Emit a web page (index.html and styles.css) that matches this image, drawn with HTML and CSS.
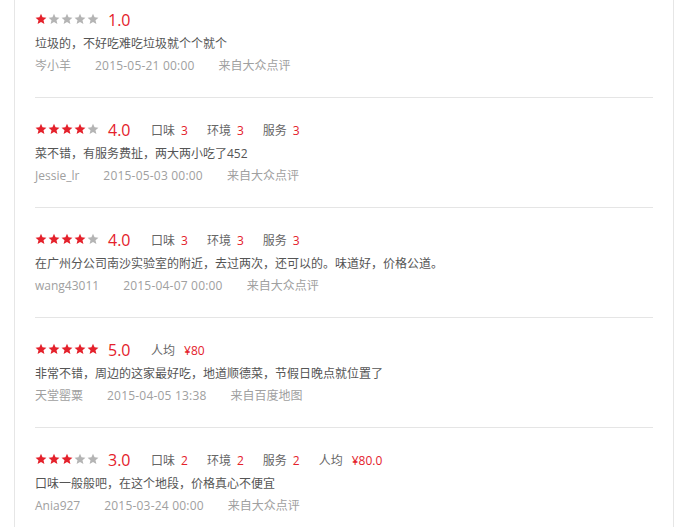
FILE: index.html
```html
<!doctype html>
<html lang="zh-CN">
  <head>
    <title>评论</title>
    <meta charset="UTF-8" />
    <meta name="viewport" content="width=device-width, initial-scale=1" />
    <link rel="stylesheet" href="styles.css">
  </head>

  <body>
    <div class="panel">
      <ul class="comment-list">
        <li class="comment">
          <div class="comment-head">
            <span class="stars">
              <svg class="star on" viewBox="0 0 24 24"><path d="M12 1.5l3.1 7.2 7.8.7-5.9 5.1 1.8 7.6L12 18.1l-6.8 4 1.8-7.6-5.9-5.1 7.8-.7z"/></svg>
              <svg class="star" viewBox="0 0 24 24"><path d="M12 1.5l3.1 7.2 7.8.7-5.9 5.1 1.8 7.6L12 18.1l-6.8 4 1.8-7.6-5.9-5.1 7.8-.7z"/></svg>
              <svg class="star" viewBox="0 0 24 24"><path d="M12 1.5l3.1 7.2 7.8.7-5.9 5.1 1.8 7.6L12 18.1l-6.8 4 1.8-7.6-5.9-5.1 7.8-.7z"/></svg>
              <svg class="star" viewBox="0 0 24 24"><path d="M12 1.5l3.1 7.2 7.8.7-5.9 5.1 1.8 7.6L12 18.1l-6.8 4 1.8-7.6-5.9-5.1 7.8-.7z"/></svg>
              <svg class="star" viewBox="0 0 24 24"><path d="M12 1.5l3.1 7.2 7.8.7-5.9 5.1 1.8 7.6L12 18.1l-6.8 4 1.8-7.6-5.9-5.1 7.8-.7z"/></svg>
            </span>
            <span class="score">1.0</span>
          </div>
          <p class="comment-text">垃圾的，不好吃难吃垃圾就个个就个</p>
          <div class="comment-meta">
            <span>岑小羊</span>
            <span class="time">2015-05-21 00:00</span>
            <span>来自大众点评</span>
          </div>
        </li>

        <li class="comment">
          <div class="comment-head">
            <span class="stars">
              <svg class="star on" viewBox="0 0 24 24"><path d="M12 1.5l3.1 7.2 7.8.7-5.9 5.1 1.8 7.6L12 18.1l-6.8 4 1.8-7.6-5.9-5.1 7.8-.7z"/></svg>
              <svg class="star on" viewBox="0 0 24 24"><path d="M12 1.5l3.1 7.2 7.8.7-5.9 5.1 1.8 7.6L12 18.1l-6.8 4 1.8-7.6-5.9-5.1 7.8-.7z"/></svg>
              <svg class="star on" viewBox="0 0 24 24"><path d="M12 1.5l3.1 7.2 7.8.7-5.9 5.1 1.8 7.6L12 18.1l-6.8 4 1.8-7.6-5.9-5.1 7.8-.7z"/></svg>
              <svg class="star on" viewBox="0 0 24 24"><path d="M12 1.5l3.1 7.2 7.8.7-5.9 5.1 1.8 7.6L12 18.1l-6.8 4 1.8-7.6-5.9-5.1 7.8-.7z"/></svg>
              <svg class="star" viewBox="0 0 24 24"><path d="M12 1.5l3.1 7.2 7.8.7-5.9 5.1 1.8 7.6L12 18.1l-6.8 4 1.8-7.6-5.9-5.1 7.8-.7z"/></svg>
            </span>
            <span class="score">4.0</span>
            <span class="sub">口味<em>3</em></span>
            <span class="sub">环境<em>3</em></span>
            <span class="sub">服务<em>3</em></span>
          </div>
          <p class="comment-text">菜不错，有服务费扯，两大两小吃了452</p>
          <div class="comment-meta">
            <span>Jessie_lr</span>
            <span class="time">2015-05-03 00:00</span>
            <span>来自大众点评</span>
          </div>
        </li>

        <li class="comment">
          <div class="comment-head">
            <span class="stars">
              <svg class="star on" viewBox="0 0 24 24"><path d="M12 1.5l3.1 7.2 7.8.7-5.9 5.1 1.8 7.6L12 18.1l-6.8 4 1.8-7.6-5.9-5.1 7.8-.7z"/></svg>
              <svg class="star on" viewBox="0 0 24 24"><path d="M12 1.5l3.1 7.2 7.8.7-5.9 5.1 1.8 7.6L12 18.1l-6.8 4 1.8-7.6-5.9-5.1 7.8-.7z"/></svg>
              <svg class="star on" viewBox="0 0 24 24"><path d="M12 1.5l3.1 7.2 7.8.7-5.9 5.1 1.8 7.6L12 18.1l-6.8 4 1.8-7.6-5.9-5.1 7.8-.7z"/></svg>
              <svg class="star on" viewBox="0 0 24 24"><path d="M12 1.5l3.1 7.2 7.8.7-5.9 5.1 1.8 7.6L12 18.1l-6.8 4 1.8-7.6-5.9-5.1 7.8-.7z"/></svg>
              <svg class="star" viewBox="0 0 24 24"><path d="M12 1.5l3.1 7.2 7.8.7-5.9 5.1 1.8 7.6L12 18.1l-6.8 4 1.8-7.6-5.9-5.1 7.8-.7z"/></svg>
            </span>
            <span class="score">4.0</span>
            <span class="sub">口味<em>3</em></span>
            <span class="sub">环境<em>3</em></span>
            <span class="sub">服务<em>3</em></span>
          </div>
          <p class="comment-text">在广州分公司南沙实验室的附近，去过两次，还可以的。味道好，价格公道。</p>
          <div class="comment-meta">
            <span>wang43011</span>
            <span class="time">2015-04-07 00:00</span>
            <span>来自大众点评</span>
          </div>
        </li>

        <li class="comment">
          <div class="comment-head">
            <span class="stars">
              <svg class="star on" viewBox="0 0 24 24"><path d="M12 1.5l3.1 7.2 7.8.7-5.9 5.1 1.8 7.6L12 18.1l-6.8 4 1.8-7.6-5.9-5.1 7.8-.7z"/></svg>
              <svg class="star on" viewBox="0 0 24 24"><path d="M12 1.5l3.1 7.2 7.8.7-5.9 5.1 1.8 7.6L12 18.1l-6.8 4 1.8-7.6-5.9-5.1 7.8-.7z"/></svg>
              <svg class="star on" viewBox="0 0 24 24"><path d="M12 1.5l3.1 7.2 7.8.7-5.9 5.1 1.8 7.6L12 18.1l-6.8 4 1.8-7.6-5.9-5.1 7.8-.7z"/></svg>
              <svg class="star on" viewBox="0 0 24 24"><path d="M12 1.5l3.1 7.2 7.8.7-5.9 5.1 1.8 7.6L12 18.1l-6.8 4 1.8-7.6-5.9-5.1 7.8-.7z"/></svg>
              <svg class="star on" viewBox="0 0 24 24"><path d="M12 1.5l3.1 7.2 7.8.7-5.9 5.1 1.8 7.6L12 18.1l-6.8 4 1.8-7.6-5.9-5.1 7.8-.7z"/></svg>
            </span>
            <span class="score">5.0</span>
            <span class="sub price">人均<em>¥80</em></span>
          </div>
          <p class="comment-text">非常不错，周边的这家最好吃，地道顺德菜，节假日晚点就位置了</p>
          <div class="comment-meta">
            <span>天堂罂粟</span>
            <span class="time">2015-04-05 13:38</span>
            <span>来自百度地图</span>
          </div>
        </li>

        <li class="comment">
          <div class="comment-head">
            <span class="stars">
              <svg class="star on" viewBox="0 0 24 24"><path d="M12 1.5l3.1 7.2 7.8.7-5.9 5.1 1.8 7.6L12 18.1l-6.8 4 1.8-7.6-5.9-5.1 7.8-.7z"/></svg>
              <svg class="star on" viewBox="0 0 24 24"><path d="M12 1.5l3.1 7.2 7.8.7-5.9 5.1 1.8 7.6L12 18.1l-6.8 4 1.8-7.6-5.9-5.1 7.8-.7z"/></svg>
              <svg class="star on" viewBox="0 0 24 24"><path d="M12 1.5l3.1 7.2 7.8.7-5.9 5.1 1.8 7.6L12 18.1l-6.8 4 1.8-7.6-5.9-5.1 7.8-.7z"/></svg>
              <svg class="star" viewBox="0 0 24 24"><path d="M12 1.5l3.1 7.2 7.8.7-5.9 5.1 1.8 7.6L12 18.1l-6.8 4 1.8-7.6-5.9-5.1 7.8-.7z"/></svg>
              <svg class="star" viewBox="0 0 24 24"><path d="M12 1.5l3.1 7.2 7.8.7-5.9 5.1 1.8 7.6L12 18.1l-6.8 4 1.8-7.6-5.9-5.1 7.8-.7z"/></svg>
            </span>
            <span class="score">3.0</span>
            <span class="sub">口味<em>2</em></span>
            <span class="sub">环境<em>2</em></span>
            <span class="sub">服务<em>2</em></span>
            <span class="sub price">人均<em>¥80.0</em></span>
          </div>
          <p class="comment-text">口味一般般吧，在这个地段，价格真心不便宜</p>
          <div class="comment-meta">
            <span>Ania927</span>
            <span class="time">2015-03-24 00:00</span>
            <span>来自大众点评</span>
          </div>
        </li>
      </ul>
    </div>
  </body>
</html>
```

FILE: styles.css
```css
body {
  margin: 0;
  padding: 0;
  background-color: #ffffff;
  font-family: 'Open Sans', 'Noto Sans CJK SC', sans-serif;
  font-size: 12px;
}

.panel {
  margin: 0 14px;
  padding: 0 20px;
  min-height: 527px;
  border-left: 1px solid #e6e6e6;
  border-right: 1px solid #e6e6e6;
}

.comment-list {
  margin: 0;
  padding: 0;
  list-style: none;
}

.comment {
  padding: 19px 0 21px;
  border-bottom: 1px solid #e5e5e5;
}

.comment:first-child {
  padding-top: 7px;
}

.comment-head {
  display: flex;
  align-items: center;
  height: 24px;
  color: #666666;
}

.stars {
  display: flex;
  align-items: center;
  gap: 1px;
}

.star {
  width: 12px;
  height: 12px;
  fill: #b4b4b4;
}

.star.on {
  fill: #e4212b;
}

.score {
  margin-left: 9px;
  margin-top: 2px;
  width: 43px;
  font-size: 16px;
  color: #e4212b;
}

.sub {
  margin-top: 2px;
  margin-right: 19px;
}

.sub em {
  margin-left: 6px;
  font-style: normal;
  color: #e4212b;
}

.sub.price em {
  margin-left: 9px;
}

.comment-text {
  margin: 0;
  padding-top: 1px;
  line-height: 24px;
  color: #555555;
}

.comment-meta {
  display: flex;
  gap: 24px;
  line-height: 20px;
  color: #a0a0a0;
}

.time {
  letter-spacing: 0.2px;
}
```
